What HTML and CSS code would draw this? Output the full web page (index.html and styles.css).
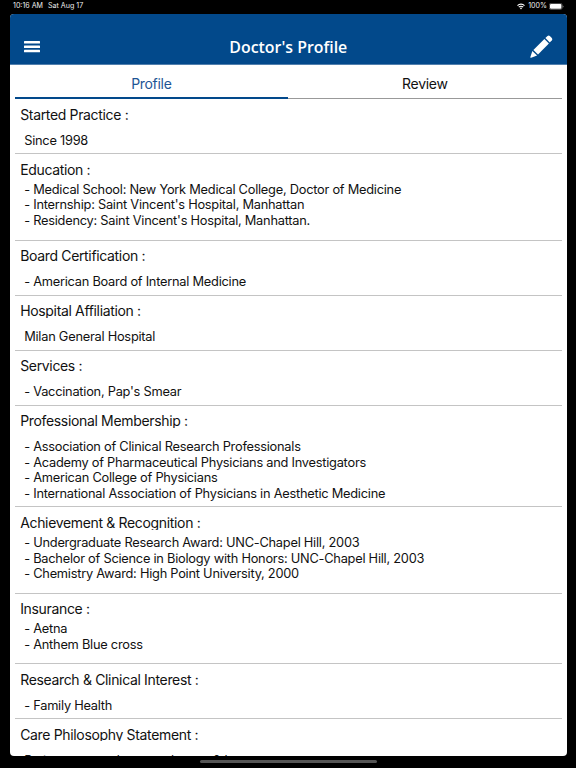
FILE: index.html
```html
<!DOCTYPE html>
<html lang="en">
<head>
  <meta charset="UTF-8">
  <title>Doctor's Profile</title>
  <link rel="stylesheet" href="styles.css">
</head>
<body>
  <div class="status">
    <span class="time">10:16 AM</span>
    <span class="date">Sat Aug 17</span>
    <svg class="wifi" width="8" height="7" viewBox="0 0 8 7" fill="none" stroke="#fff" stroke-width="1.1">
      <path d="M0.5 2.6a5 5 0 0 1 7 0M1.8 4.1a3.1 3.1 0 0 1 4.4 0"/>
      <path d="M2.9 5.1L4 6.4l1.1-1.3a1.6 1.6 0 0 0-2.2 0z" fill="#fff" stroke="none"/>
    </svg>
    <span class="percent">100%</span>
    <svg class="battery" width="15" height="7" viewBox="0 0 15 7">
      <rect x="0.3" y="0.4" width="12.8" height="6" rx="1.6" fill="none" stroke="#888" stroke-width="0.6"/>
      <rect x="1" y="1" width="11.4" height="4.8" rx="1" fill="#fff"/>
      <path d="M13.7 2.4v2.1q.9-.3.9-1.05t-.9-1.05z" fill="#888"/>
    </svg>
  </div>

  <div class="app">
    <header class="navbar">
      <svg class="menu" width="16" height="12" viewBox="0 0 16 12" fill="#fff">
        <rect width="16" height="2.5" rx="0.5"/>
        <rect y="4.4" width="16" height="2.5" rx="0.5"/>
        <rect y="8.8" width="16" height="2.5" rx="0.5"/>
      </svg>
      <h1>Doctor's Profile</h1>
      <svg class="edit" width="23" height="23" viewBox="0 0 23 23" fill="#fff">
        <path d="M15.4 3.1L17.5 1q1.2-1 2.3 0l2 2q1.1 1.2.1 2.3L19.8 7.5z"/>
        <path d="M14.4 4.1l4.5 4.5L8 19.5 3.4 15z"/>
        <path d="M2.3 16l4.8 4.6-6 2.1q-1 .3-.7-.8z"/>
      </svg>
    </header>

    <nav class="tabs">
      <div class="tab active">Profile</div>
      <div class="tab">Review</div>
    </nav>

    <main>
      <section>
        <h2>Started Practice :</h2>
        <p>Since 1998</p>
      </section>
      <section class="tight">
        <h2>Education :</h2>
        <p>- Medical School: New York Medical College, Doctor of Medicine<br>
        - Internship: Saint Vincent's Hospital, Manhattan<br>
        - Residency: Saint Vincent's Hospital, Manhattan.</p>
      </section>
      <section>
        <h2>Board Certification :</h2>
        <p>- American Board of Internal Medicine</p>
      </section>
      <section>
        <h2>Hospital Affiliation :</h2>
        <p>Milan General Hospital</p>
      </section>
      <section>
        <h2>Services :</h2>
        <p>- Vaccination, Pap's Smear</p>
      </section>
      <section>
        <h2>Professional Membership :</h2>
        <p>- Association of Clinical Research Professionals<br>
        - Academy of Pharmaceutical Physicians and Investigators<br>
        - American College of Physicians<br>
        - International Association of Physicians in Aesthetic Medicine</p>
      </section>
      <section class="tight">
        <h2>Achievement &amp; Recognition :</h2>
        <p>- Undergraduate Research Award: UNC-Chapel Hill, 2003<br>
        - Bachelor of Science in Biology with Honors: UNC-Chapel Hill, 2003<br>
        - Chemistry Award: High Point University, 2000</p>
      </section>
      <section class="tight">
        <h2>Insurance :</h2>
        <p>- Aetna<br>
        - Anthem Blue cross</p>
      </section>
      <section>
        <h2>Research &amp; Clinical Interest :</h2>
        <p>- Family Health</p>
      </section>
      <section>
        <h2>Care Philosophy Statement :</h2>
        <p>Patient centered approach as to &amp; h</p>
      </section>
    </main>
  </div>

  <div class="home-bar"></div>
</body>
</html>
```

FILE: styles.css
```css
* {
  box-sizing: border-box;
}
body {
  margin: 0;
  height: 768px;
  overflow: hidden;
  background: #000;
  color: #111;
  font-family: Inter, "Liberation Sans", sans-serif;
}
.status {
  display: flex;
  align-items: center;
  height: 14px;
  padding: 0 12px 2px 13px;
  color: #eee;
  font-size: 7.1px;
  line-height: 12px;
}
.date {
  margin-left: 5px;
}
.wifi {
  margin-left: auto;
}
.percent {
  margin: 0 2px 0 3px;
}
.app {
  height: 742px;
  margin: 0 9.4px 0 9.6px;
  overflow: hidden;
  background: #fff;
  border-radius: 4px;
}
.navbar {
  display: flex;
  align-items: center;
  justify-content: space-between;
  height: 51.4px;
  padding: 13px 14px 0 14.4px;
  background: #02498b;
  border-bottom: 1px solid #517fad;
  color: #fff;
}
.navbar h1 {
  margin: 2px 0 0 7px;
  font: 600 15.9px/24px "Open Sans", sans-serif;
}
.menu {
  margin-top: 2px;
}
.edit {
  margin-top: 1px;
}
.tabs {
  display: flex;
  height: 33.9px;
  margin: 0 5px;
}
.tab {
  flex: 1;
  padding-top: 8px;
  border-bottom: 1px solid #999;
  font-size: 14px;
  letter-spacing: -0.3px;
  line-height: 21px;
  text-align: center;
}
.tab.active {
  border-bottom: 2px solid #02498b;
  color: #1d5595;
}
section {
  margin: 0 5px;
  padding: 6.6px 6px 4.9px 5.6px;
  border-bottom: 1px solid #c4c4c4;
}
section h2 {
  height: 15.6px;
  margin: 0;
  overflow: hidden;
  font-size: 14px;
  font-weight: 400;
  letter-spacing: -0.34px;
  line-height: 18px;
}
section p {
  margin: 11.3px 0 0 4px;
  font-size: 12.8px;
  letter-spacing: -0.24px;
  line-height: 15.63px;
}
section.tight {
  padding-bottom: 10.9px;
}
section.tight p {
  margin-top: 5.3px;
}
.home-bar {
  width: 177px;
  height: 3px;
  margin: 4px auto 0;
  background: #555;
  border-radius: 2px;
}
```
